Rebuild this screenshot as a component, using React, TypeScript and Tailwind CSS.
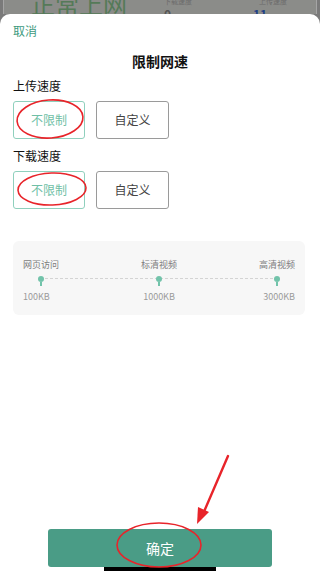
import React from "react";

const font = { fontFamily: '"Noto Sans CJK SC", "Noto Sans", sans-serif' };

function SpeedOptions() {
  return (
    <div className="flex gap-[11px]">
      <button className="w-[72px] h-[38px] rounded-[3px] border border-[#8fd0bd] text-[12px] text-[#6fbfa6]">
        不限制
      </button>
      <button className="w-[73px] h-[38px] rounded-[3px] border border-[#9a9a9a] text-[12px] text-[#444]">
        自定义
      </button>
    </div>
  );
}

function Pin() {
  return (
    <div className="flex flex-col items-center">
      <div className="w-[6px] h-[6px] rounded-full bg-[#72c3aa]" />
      <div className="w-[1.5px] h-[4px] bg-[#72c3aa]" />
    </div>
  );
}

export default function App() {
  const marks = [
    { label: "网页访问", value: "100KB", align: "self-start" },
    { label: "标清视频", value: "1000KB", align: "self-center" },
    { label: "高清视频", value: "3000KB", align: "self-end" },
  ];

  return (
    <div className="relative w-[320px] h-[571px] overflow-hidden bg-[#7a7a7a]" style={font}>
      {/* dimmed page behind the sheet */}
      <div className="h-[14px] px-[3px]">
        <div className="relative h-full bg-[#8b8c89] border-x border-[#a5a5a5] overflow-hidden">
          <span className="absolute left-[27px] top-[-10px] text-[24px] leading-[28px] text-[#557a58]">正常上网</span>
          <span className="absolute left-[160px] top-[-4px] text-[7px] text-[#6b6b6b]">下载速度</span>
          <span className="absolute left-[255px] top-[-4px] text-[7px] text-[#6b6b6b]">上传速度</span>
          <span className="absolute left-[160px] top-[8px] text-[12px] font-bold leading-[12px] text-[#555]">0</span>
          <span className="absolute left-[249px] top-[8px] text-[12px] font-bold leading-[12px] text-[#1d3f86]">11</span>
        </div>
      </div>

      {/* bottom sheet */}
      <div className="flex flex-col h-[557px] bg-white rounded-t-[10px] px-[13px] pt-[9px]">
        <div className="text-[12px] leading-[16px] text-[#3d9a7e]">取消</div>
        <div className="mt-[12px] text-center text-[14px] leading-[20px] font-bold text-[#111]">限制网速</div>

        <div className="mt-[7px] text-[12px] leading-[16px] text-[#111]">上传速度</div>
        <div className="mt-[7px]">
          <SpeedOptions />
        </div>

        <div className="mt-[9px] text-[12px] leading-[16px] text-[#111]">下载速度</div>
        <div className="mt-[7px]">
          <SpeedOptions />
        </div>

        <div className="mt-[32px] h-[74px] w-[292px] rounded-[6px] bg-[#f7f7f7] px-[10px] pt-[18px] relative">
          <div className="absolute left-[32px] right-[32px] top-[37px] border-t border-dashed border-[#d4d4d4]" />
          <div className="flex justify-between">
            {marks.map((m) => (
              <div key={m.label} className="flex flex-col items-center w-[36px]">
                <span className="text-[9px] leading-[12px] text-[#7d7d7d] whitespace-nowrap">{m.label}</span>
                <div className="mt-[5px] relative z-10">
                  <Pin />
                </div>
                <span className={`mt-[5px] text-[9px] leading-[12px] text-[#9a9a9a] whitespace-nowrap ${m.align}`}>
                  {m.value}
                </span>
              </div>
            ))}
          </div>
        </div>

        <div className="flex-1" />

        <div className="flex justify-center">
          <button className="w-[224px] h-[38px] rounded-[3px] bg-[#4a9c86] text-white text-[14px]">确定</button>
        </div>
        <div className="flex justify-center">
          <div className="w-[112px] h-[4px] bg-black" />
        </div>
      </div>

      {/* red annotations */}
      <svg className="absolute inset-0 pointer-events-none" width="320" height="571" viewBox="0 0 320 571">
        <ellipse cx="50" cy="119" rx="33" ry="19" fill="none" stroke="#e8242a" strokeWidth="1.6" transform="rotate(-4 50 119)" />
        <ellipse cx="52" cy="189" rx="34" ry="16" fill="none" stroke="#e8242a" strokeWidth="1.6" transform="rotate(-2 52 189)" />
        <ellipse cx="159" cy="545" rx="42" ry="22" fill="none" stroke="#e8242a" strokeWidth="1.6" />
        <path d="M228 456 L203 514" stroke="#e8242a" strokeWidth="2.4" strokeLinecap="round" />
        <path d="M197 524 L198 507 L209 512 Z" fill="#e8242a" />
      </svg>
    </div>
  );
}
